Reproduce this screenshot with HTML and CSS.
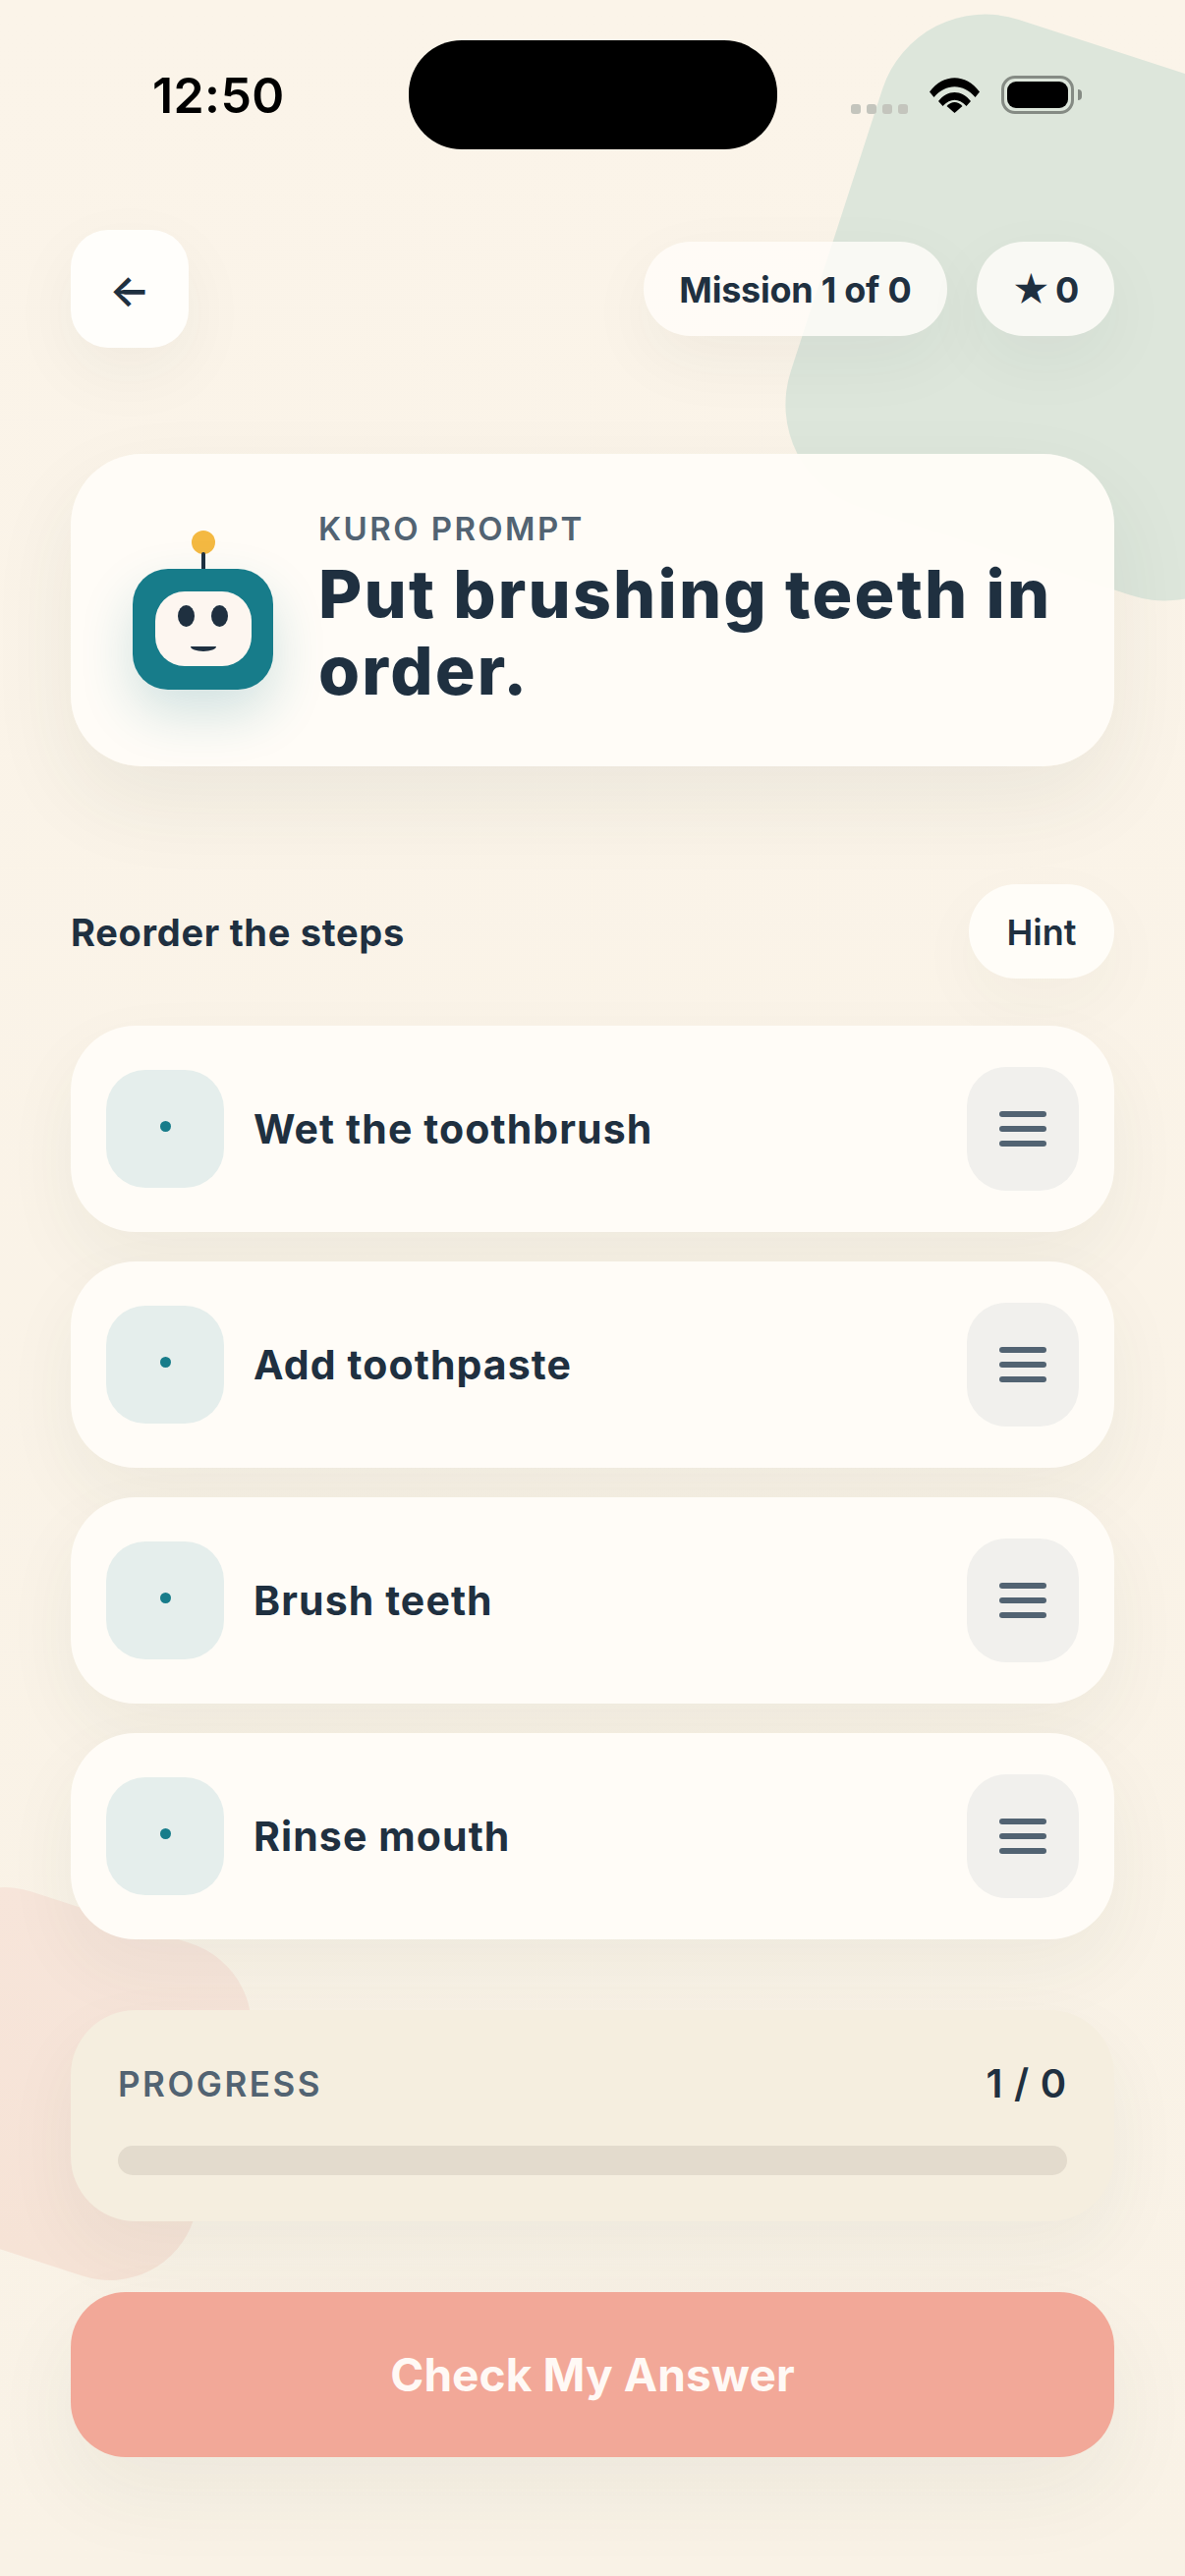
FILE: index.html
```html
<!DOCTYPE html>
<html lang="en">
<head>
  <meta charset="UTF-8" />
  <meta name="viewport" content="width=device-width, initial-scale=1.0" />
  <title>Kuro Mission</title>
  <link rel="stylesheet" href="styles.css">
</head>
<body>
  <div class="backdrop">
    <div class="blob blob-green"></div>
    <div class="blob blob-pink"></div>
  </div>

  <div class="status-bar">
    <div class="time">12:50</div>
    <div class="island"></div>
    <div class="status-icons">
      <div class="signal"><span></span><span></span><span></span><span></span></div>
      <svg class="wifi" viewBox="0 0 51 37">
        <path d="M0 15.5C14-3.5 37-3.5 51 15.5L46.5 21C34.5 6.500 16.500 6.500 4.500 21Z"/>
        <path d="M9 25C18.500 13 32.500 13 42 25L37.500 30C29.500 21.500 21.500 21.500 13.500 30Z"/>
        <path d="M17.500 30C22.500 24.500 28.500 24.500 33.500 30L25.500 37Z"/>
      </svg>
      <div class="battery"><div class="battery-fill"></div></div>
      <div class="battery-cap"></div>
    </div>
  </div>

  <div class="topbar">
    <button class="back-btn">←</button>
    <div class="topbar-pills">
      <div class="pill">Mission 1 of 0</div>
      <div class="pill pill-stars"><span class="star">★</span>0</div>
    </div>
  </div>

  <div class="prompt-card">
    <div class="robot">
      <div class="robot-ball"></div>
      <div class="robot-stick"></div>
      <div class="robot-head">
        <div class="robot-face">
          <div class="robot-eyes"><span></span><span></span></div>
          <div class="robot-mouth"></div>
        </div>
      </div>
    </div>
    <div class="prompt-text">
      <div class="prompt-label">KURO PROMPT</div>
      <h1>Put brushing teeth in order.</h1>
    </div>
  </div>

  <div class="section-head">
    <div class="section-title">Reorder the steps</div>
    <button class="hint-btn">Hint</button>
  </div>

  <div class="steps">
    <div class="step">
      <div class="step-num"><span class="step-dot"></span></div>
      <div class="step-label">Wet the toothbrush</div>
      <div class="step-handle"><span></span><span></span><span></span></div>
    </div>
    <div class="step">
      <div class="step-num"><span class="step-dot"></span></div>
      <div class="step-label">Add toothpaste</div>
      <div class="step-handle"><span></span><span></span><span></span></div>
    </div>
    <div class="step">
      <div class="step-num"><span class="step-dot"></span></div>
      <div class="step-label">Brush teeth</div>
      <div class="step-handle"><span></span><span></span><span></span></div>
    </div>
    <div class="step">
      <div class="step-num"><span class="step-dot"></span></div>
      <div class="step-label">Rinse mouth</div>
      <div class="step-handle"><span></span><span></span><span></span></div>
    </div>
  </div>

  <div class="progress-card">
    <div class="progress-head">
      <div class="progress-label">PROGRESS</div>
      <div class="progress-count">1 / 0</div>
    </div>
    <div class="progress-track"></div>
  </div>

  <button class="check-btn">Check My Answer</button>
</body>
</html>
```

FILE: styles.css
```css
* { box-sizing: border-box; }
html, body { height: 100%; }
body {
  margin: 0;
  width: 1206px;
  height: 2622px;
  position: relative;
  overflow: hidden;
  font-family: 'Inter', 'Liberation Sans', sans-serif;
  background: linear-gradient(180deg, #fbf4e9 0%, #f9f2e6 100%);
  color: #1f3040;
}
button {
  font-family: inherit;
  color: inherit;
  border: none;
  cursor: pointer;
}

/* background shapes */
.backdrop {
  position: absolute;
  top: 0;
  right: 0;
  bottom: 0;
  left: 0;
  overflow: hidden;
}
.blob {
  position: absolute;
  transform: rotate(18deg);
}
.blob-green {
  left: 839px;
  top: 52px;
  width: 510px;
  height: 522px;
  border-radius: 110px;
  background: #dde6db;
}
.blob-pink {
  left: -117px;
  top: 1943px;
  width: 350px;
  height: 356px;
  border-radius: 90px;
  background: linear-gradient(180deg, #f7e5da 0%, #f6e3d6 100%);
}

/* status bar */
.status-bar {
  position: relative;
  display: grid;
  grid-template-columns: 1fr 375px 1fr;
  align-items: center;
  padding-top: 41px;
}
.time {
  padding-left: 155px;
  font-size: 50px;
  font-weight: 600;
  color: #000;
  letter-spacing: 0.4px;
}
.island {
  height: 111px;
  border-radius: 54px;
  background: #000;
}
.status-icons {
  display: flex;
  align-items: center;
  padding-left: 75px;
}
.signal {
  display: flex;
  gap: 6px;
  margin-top: 29px;
}
.signal span {
  width: 10px;
  height: 10px;
  border-radius: 3px;
  background: #c4c5bd;
}
.wifi {
  width: 51px;
  height: 37px;
  margin-left: 22px;
  fill: #000;
}
.battery {
  width: 74px;
  height: 39px;
  margin-left: 22px;
  padding: 3px;
  border: 3px solid #858b84;
  border-radius: 14px;
}
.battery-fill {
  height: 100%;
  border-radius: 9px;
  background: #000;
}
.battery-cap {
  width: 4px;
  height: 11px;
  margin-left: 4px;
  border-radius: 0 4px 4px 0;
  background: #858b84;
}

/* top bar */
.topbar {
  position: relative;
  display: flex;
  align-items: center;
  justify-content: space-between;
  margin-top: 82px;
  padding: 0 72px;
}
.back-btn {
  width: 120px;
  height: 120px;
  padding: 2px 0 0;
  border-radius: 38px;
  background: #fffefb;
  font-size: 44px;
  font-weight: 600;
  box-shadow: 0 24px 70px rgba(40, 64, 52, 0.05);
}
.topbar-pills {
  display: flex;
  gap: 30px;
}
.pill {
  height: 96px;
  padding: 2px 36px 0;
  display: flex;
  align-items: center;
  border-radius: 48px;
  background: rgba(255, 253, 249, 0.82);
  font-size: 36px;
  font-weight: 700;
  letter-spacing: -0.25px;
  box-shadow: 0 24px 70px rgba(40, 64, 52, 0.05);
}
.pill-stars {
  gap: 5px;
  padding: 2px 36px 0;
}
.star { font-size: 38px; }

/* prompt card */
.prompt-card {
  position: relative;
  display: flex;
  align-items: center;
  gap: 46px;
  height: 318px;
  margin: 108px 72px 0;
  padding-left: 63px;
  border-radius: 72px;
  background: rgba(255, 252, 247, 0.97);
  box-shadow: 0 36px 90px rgba(40, 64, 52, 0.07);
}
.robot {
  position: relative;
  display: flex;
  flex-direction: column;
  align-items: center;
  flex: none;
  width: 143px;
}
.robot-ball {
  width: 24px;
  height: 24px;
  border-radius: 50%;
  background: #f4b942;
}
.robot-stick {
  width: 4px;
  height: 17px;
  margin-top: -2px;
  border-radius: 2px 2px 0 0;
  background: #1f3040;
}
.robot-head {
  width: 143px;
  height: 123px;
  padding-top: 23px;
  border-radius: 36px;
  background: #177c8a;
  box-shadow: 0 24px 54px rgba(23, 124, 138, 0.2);
}
.robot-face {
  width: 98px;
  height: 76px;
  margin: 0 auto;
  padding-top: 14px;
  border-radius: 30px;
  background: #fdf6f0;
}
.robot-eyes {
  display: flex;
  justify-content: center;
  gap: 17px;
}
.robot-eyes span {
  width: 17px;
  height: 22px;
  border-radius: 50%;
  background: #1f3040;
}
.robot-mouth {
  width: 26px;
  height: 5px;
  margin: 20px auto 0;
  border-radius: 0 0 50% 50% / 0 0 100% 100%;
  background: #1f3040;
}
.prompt-text { padding-bottom: 3px; }
.prompt-label {
  font-size: 33px;
  font-weight: 600;
  letter-spacing: 2.4px;
  line-height: 40px;
  color: #526372;
}
.prompt-text h1 {
  margin: 7px 0 0;
  font-size: 68px;
  font-weight: 800;
  line-height: 78px;
  letter-spacing: 2.2px;
}

/* steps */
.section-head {
  position: relative;
  display: flex;
  align-items: center;
  justify-content: space-between;
  margin: 120px 72px 0;
}
.section-title {
  padding-top: 2px;
  font-size: 38px;
  font-weight: 700;
  letter-spacing: 0.7px;
}
.hint-btn {
  width: 148px;
  height: 96px;
  padding: 2px 0 0;
  border-radius: 48px;
  background: #fffdf8;
  font-size: 36px;
  font-weight: 600;
  box-shadow: 0 24px 70px rgba(40, 64, 52, 0.04);
}
.steps {
  position: relative;
  display: flex;
  flex-direction: column;
  gap: 30px;
  margin: 48px 72px 0;
}
.step {
  display: flex;
  align-items: center;
  gap: 30px;
  height: 210px;
  padding: 0 36px;
  border-radius: 66px;
  background: #fffcf7;
  box-shadow: 0 30px 76px rgba(40, 64, 52, 0.055);
}
.step-num {
  flex: none;
  width: 120px;
  height: 120px;
  padding-top: 52px;
  display: flex;
  justify-content: center;
  border-radius: 40px;
  background: #e5eeec;
}
.step-dot {
  width: 11px;
  height: 11px;
  border-radius: 50%;
  background: #177c8a;
}
.step-label {
  flex: 1;
  font-size: 41px;
  font-weight: 700;
  letter-spacing: 1.1px;
}
.step-handle {
  flex: none;
  width: 114px;
  height: 126px;
  display: flex;
  flex-direction: column;
  align-items: center;
  justify-content: center;
  gap: 9px;
  border-radius: 40px;
  background: #f1f0ed;
}
.step-handle span {
  width: 48px;
  height: 6px;
  border-radius: 3px;
  background: #526372;
}

/* progress */
.progress-card {
  position: relative;
  height: 215px;
  margin: 72px 72px 0;
  padding: 48px 48px 0;
  border-radius: 66px;
  background: #f5eedf;
  box-shadow: 0 30px 76px rgba(40, 64, 52, 0.055);
}
.progress-head {
  height: 48px;
  padding-top: 5px;
  display: flex;
  align-items: center;
  justify-content: space-between;
}
.progress-label {
  font-size: 35px;
  font-weight: 600;
  letter-spacing: 2.5px;
  color: #526372;
}
.progress-count {
  font-size: 40px;
  font-weight: 600;
  letter-spacing: 0.8px;
}
.progress-track {
  height: 30px;
  margin-top: 42px;
  border-radius: 15px;
  background: #e3dbcd;
}

/* check button */
.check-btn {
  position: relative;
  display: block;
  width: 1062px;
  height: 168px;
  margin: 72px 72px 0;
  border-radius: 56px;
  background: #f2a898;
  color: #fff9f5;
  font-size: 46px;
  font-weight: 700;
  letter-spacing: 0.1px;
  box-shadow: 0 36px 90px rgba(40, 64, 52, 0.06);
}
```
